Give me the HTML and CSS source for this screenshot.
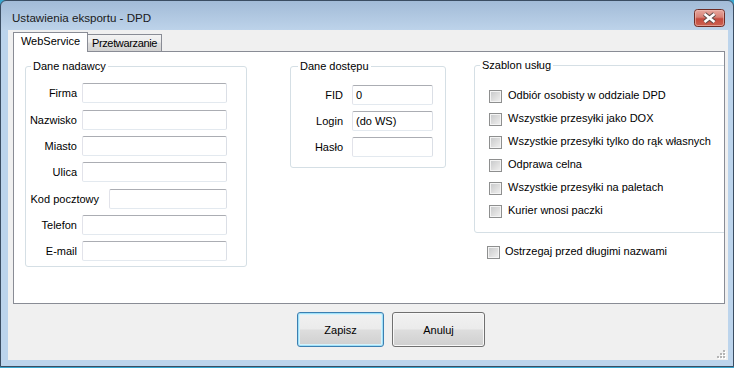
FILE: index.html
```html
<!DOCTYPE html>
<html lang="pl">
<head>
<meta charset="utf-8">
<title>Ustawienia eksportu - DPD</title>
<link rel="stylesheet" href="styles.css">
</head>
<body>
<div class="window">
  <div class="titlebar">
    <span class="title">Ustawienia eksportu - DPD</span>
    <span class="close">
      <svg width="31" height="18" viewBox="0 0 31 18">
        <defs>
          <linearGradient id="cg" x1="0" y1="0" x2="0" y2="1">
            <stop offset="0" stop-color="#e8aaa1"/>
            <stop offset="0.45" stop-color="#d78277"/>
            <stop offset="0.55" stop-color="#c44a3d"/>
            <stop offset="1" stop-color="#cd6352"/>
          </linearGradient>
        </defs>
        <rect x="0.5" y="0.5" width="30" height="17" rx="3" fill="url(#cg)" stroke="#6e2c25"/>
        <rect x="1.5" y="1.5" width="28" height="15" rx="2" fill="none" stroke="#eec0b8" stroke-opacity="0.6"/>
        <path d="M10.5 5 L20.5 13 M20.5 5 L10.5 13" stroke="#5d4a48" stroke-width="4.6" fill="none"/>
        <path d="M10.5 5 L20.5 13 M20.5 5 L10.5 13" stroke="#ffffff" stroke-width="2.6" fill="none"/>
      </svg>
    </span>
  </div>
  <div class="client">
    <div class="tabs">
      <div class="tab active">WebService</div>
      <div class="tab">Przetwarzanie</div>
    </div>
    <div class="panel">
      <div class="group sender">
        <span class="legend">Dane nadawcy</span>
        <div class="field"><span class="lbl">Firma</span><input class="input wide" type="text"></div>
        <div class="field gap7"><span class="lbl">Nazwisko</span><input class="input wide" type="text"></div>
        <div class="field"><span class="lbl">Miasto</span><input class="input wide" type="text"></div>
        <div class="field"><span class="lbl">Ulica</span><input class="input wide" type="text"></div>
        <div class="field gap7"><span class="lbl lbl-kod">Kod pocztowy</span><input class="input kod" type="text"></div>
        <div class="field"><span class="lbl">Telefon</span><input class="input wide" type="text"></div>
        <div class="field"><span class="lbl">E-mail</span><input class="input wide" type="text"></div>
      </div>
      <div class="group access">
        <span class="legend legend-mid">Dane dostępu</span>
        <div class="field"><span class="lbl lbl-mid">FID</span><input class="input short" type="text" value="0"></div>
        <div class="field"><span class="lbl lbl-mid">Login</span><input class="input short" type="text" value="(do WS)"></div>
        <div class="field"><span class="lbl lbl-mid">Hasło</span><input class="input short" type="password"></div>
      </div>
      <div class="right-col">
        <div class="group services">
          <span class="legend">Szablon usług</span>
          <div class="check"><span class="box"></span><span class="ctext">Odbiór osobisty w oddziale DPD</span></div>
          <div class="check"><span class="box"></span><span class="ctext">Wszystkie przesyłki jako DOX</span></div>
          <div class="check"><span class="box"></span><span class="ctext">Wszystkie przesyłki tylko do rąk własnych</span></div>
          <div class="check"><span class="box"></span><span class="ctext">Odprawa celna</span></div>
          <div class="check"><span class="box"></span><span class="ctext">Wszystkie przesyłki na paletach</span></div>
          <div class="check"><span class="box"></span><span class="ctext">Kurier wnosi paczki</span></div>
        </div>
        <div class="check warn"><span class="box"></span><span class="ctext">Ostrzegaj przed długimi nazwami</span></div>
      </div>
    </div>
    <div class="buttons">
      <button class="btn btn-default" type="button">Zapisz</button>
      <button class="btn btn-cancel" type="button">Anuluj</button>
    </div>
    <span class="grip">
      <svg width="10" height="10" viewBox="0 0 10 10">
        <g fill="#ffffff">
          <rect x="8" y="2" width="2" height="2"/>
          <rect x="5" y="5" width="2" height="2"/><rect x="8" y="5" width="2" height="2"/>
          <rect x="2" y="8" width="2" height="2"/><rect x="5" y="8" width="2" height="2"/><rect x="8" y="8" width="2" height="2"/>
        </g>
        <g fill="#b4b4b4">
          <rect x="7" y="1" width="2" height="2"/>
          <rect x="4" y="4" width="2" height="2"/><rect x="7" y="4" width="2" height="2"/>
          <rect x="1" y="7" width="2" height="2"/><rect x="4" y="7" width="2" height="2"/><rect x="7" y="7" width="2" height="2"/>
        </g>
      </svg>
    </span>
  </div>
</div>
</body>
</html>
```
FILE: styles.css
```css
html, body {
  margin: 0;
  padding: 0;
}
body {
  background: #3aa6cf;
  font-family: "Liberation Sans", Arial, sans-serif;
  font-size: 11px;
  color: #000;
  width: 734px;
  height: 368px;
  overflow: hidden;
}
.window {
  box-sizing: border-box;
  width: 734px;
  height: 367px;
  border: 1px solid #3b4d62;
  border-radius: 6px 6px 0 0;
  background: linear-gradient(to bottom, #a2bbd7 0px, #bdd3ea 29px, #bcd4ec 30px, #bcd4ec 100%);
  display: flex;
  flex-direction: column;
}
.titlebar {
  height: 29px;
  display: flex;
  align-items: flex-start;
  padding-left: 11px;
  flex-shrink: 0;
}
.title {
  font-family: "Liberation Sans", Arial, sans-serif;
  font-size: 11.6px;
  line-height: 14px;
  padding-top: 10px;
  color: #1a1a1a;
}
.close {
  margin-left: auto;
  margin-top: 8px;
  margin-right: 8px;
  width: 31px;
  height: 18px;
  display: block;
}
.close svg {
  display: block;
}
.client {
  position: relative;
  box-sizing: border-box;
  margin-left: 7px;
  width: 720px;
  height: 330px;
  background: #f0f0f0;
  padding: 2px 3px 0 5px;
  flex-shrink: 0;
}
.tabs {
  position: relative;
  z-index: 1;
  display: flex;
  align-items: flex-end;
  height: 20px;
}
.tab {
  box-sizing: border-box;
  width: 74px;
  height: 18px;
  border: 1px solid #898c95;
  border-left: 0;
  background: linear-gradient(to bottom, #f3f3f3 0%, #ebebeb 45%, #dddddd 50%, #d2d2d2 100%);
  text-align: center;
  line-height: 13px;
  padding-top: 2px;
  white-space: nowrap;
  letter-spacing: -0.35px;
}
.tab.active {
  width: 75px;
  height: 20px;
  border-left: 1px solid #898c95;
  border-bottom: 0;
  background: #fff;
  padding-top: 2px;
  letter-spacing: 0;
}
.panel {
  box-sizing: border-box;
  width: 712px;
  height: 253px;
  margin-top: -1px;
  border: 1px solid #898c95;
  background: #fff;
  display: flex;
  align-items: flex-start;
  padding: 14px 0 0 11px;
  overflow: hidden;
}
.group {
  position: relative;
  box-sizing: border-box;
  border: 1px solid #d5dfe5;
  border-radius: 3px;
  flex-shrink: 0;
}
.legend {
  position: absolute;
  top: -7px;
  left: 5px;
  padding: 0 2px;
  background: #fff;
  line-height: 13px;
  white-space: nowrap;
}
.legend-mid {
  left: 7px;
}
.sender {
  width: 222px;
  height: 201px;
  padding: 16px 19px 0 0;
}
.field {
  display: flex;
  align-items: center;
  justify-content: flex-end;
  height: 20px;
}
.field + .field {
  margin-top: 6px;
}
.field.gap7 {
  margin-top: 7px;
}
.lbl {
  line-height: 13px;
  margin-right: 5px;
  white-space: nowrap;
}
.lbl-kod {
  margin-right: 10px;
}
.lbl-mid {
  margin-right: 9px;
}
.input {
  box-sizing: border-box;
  height: 20px;
  margin: 0;
  padding: 0 3px;
  border: 1px solid;
  border-color: #abadb3 #dbdfe6 #e3e9ef #e2e3ea;
  border-radius: 2px;
  background: #fff;
  font-family: "Liberation Sans", Arial, sans-serif;
  font-size: 11px;
  color: #000;
  outline: none;
}
.input.wide {
  width: 145px;
}
.input.kod {
  width: 118px;
}
.input.short {
  width: 81px;
}
.access {
  width: 156px;
  height: 102px;
  margin-left: 43px;
  padding: 18px 12px 0 0;
}
.right-col {
  margin-left: 28px;
  margin-top: -1px;
  width: 260px;
  flex-shrink: 0;
}
.services {
  width: 260px;
  height: 168px;
  padding: 19px 0 0 14px;
}
.check {
  display: flex;
  align-items: center;
  height: 23px;
}
.box {
  box-sizing: border-box;
  width: 13px;
  height: 13px;
  border: 1px solid #8e8f8f;
  background: linear-gradient(135deg, #c5c7c9 0%, #dcdcdc 50%, #f2f2f2 100%);
  box-shadow: inset 0 0 0 1px #f4f4f4;
  margin-right: 6px;
  flex-shrink: 0;
}
.ctext {
  line-height: 13px;
  padding-bottom: 3px;
  white-space: nowrap;
}
.warn {
  margin-top: 8px;
  margin-left: 13px;
}
.warn .box {
  margin-right: 5px;
}
.buttons {
  display: flex;
  gap: 8px;
  margin-top: 8px;
  margin-left: 284px;
}
.btn {
  box-sizing: border-box;
  height: 35px;
  margin: 0;
  padding: 0;
  border: 1px solid #707070;
  border-radius: 3px;
  background: linear-gradient(to bottom, #f2f2f2 0%, #ebebeb 48%, #dddddd 52%, #cfcfcf 100%);
  box-shadow: inset 0 0 0 1px #f8f8f8;
  font-family: "Liberation Sans", Arial, sans-serif;
  font-size: 11px;
  color: #000;
  text-align: center;
}
.btn-default {
  width: 87px;
  border-color: #3c7fb1;
  box-shadow: inset 0 0 0 1px #9fe0f8, inset 0 0 0 2px #d6f2fc;
}
.btn-cancel {
  width: 93px;
}
.grip {
  position: absolute;
  right: 2px;
  bottom: 1px;
  width: 10px;
  height: 10px;
}
.grip svg {
  display: block;
}
```
